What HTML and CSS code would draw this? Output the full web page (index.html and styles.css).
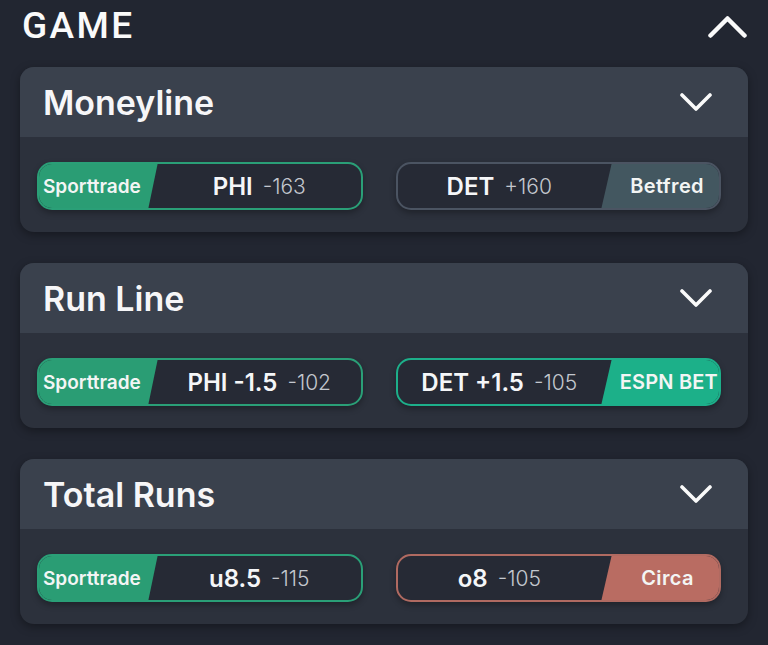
FILE: index.html
```html
<!DOCTYPE html>
<html lang="en">
<head>
  <meta charset="UTF-8" />
  <title>Game Odds</title>
  <link rel="stylesheet" href="styles.css">
</head>
<body>
  <div class="section-head">
    <h1>GAME</h1>
    <svg class="chev-up" width="39" height="22" viewBox="0 0 39 22"><polyline points="2.5,19.5 19.5,2.5 36.5,19.5" /></svg>
  </div>

  <div class="market">
    <div class="market-head">
      <h2>Moneyline</h2>
      <svg class="chev" width="32" height="18" viewBox="0 0 32 18"><polyline points="2,2 16,16 30,2" /></svg>
    </div>
    <div class="market-body">
      <div class="bet left sporttrade">
        <div class="book">Sporttrade</div>
        <div class="pick"><b>PHI</b><span>-163</span></div>
      </div>
      <div class="bet right betfred">
        <div class="pick"><b>DET</b><span>+160</span></div>
        <div class="book">Betfred</div>
      </div>
    </div>
  </div>

  <div class="market">
    <div class="market-head">
      <h2>Run Line</h2>
      <svg class="chev" width="32" height="18" viewBox="0 0 32 18"><polyline points="2,2 16,16 30,2" /></svg>
    </div>
    <div class="market-body">
      <div class="bet left sporttrade">
        <div class="book">Sporttrade</div>
        <div class="pick"><b>PHI -1.5</b><span>-102</span></div>
      </div>
      <div class="bet right espn">
        <div class="pick"><b>DET +1.5</b><span>-105</span></div>
        <div class="book">ESPN BET</div>
      </div>
    </div>
  </div>

  <div class="market">
    <div class="market-head">
      <h2>Total Runs</h2>
      <svg class="chev" width="32" height="18" viewBox="0 0 32 18"><polyline points="2,2 16,16 30,2" /></svg>
    </div>
    <div class="market-body">
      <div class="bet left sporttrade">
        <div class="book">Sporttrade</div>
        <div class="pick"><b>u8.5</b><span>-115</span></div>
      </div>
      <div class="bet right circa">
        <div class="pick"><b>o8</b><span>-105</span></div>
        <div class="book">Circa</div>
      </div>
    </div>
  </div>
</body>
</html>
```

FILE: styles.css
```css
body {
  margin: 0;
  padding: 0 20px;
  background: #222631;
  font-family: Inter, "Open Sans", sans-serif;
  color: #f4f5f7;
}
.section-head {
  height: 50px;
  display: flex;
  align-items: center;
  justify-content: space-between;
  padding: 0 1px 0 2px;
  margin-bottom: 17px;
}
.section-head h1 {
  margin: 0;
  font-family: Roboto, sans-serif;
  font-weight: 500;
  font-size: 37px;
  letter-spacing: 2.4px;
  color: #fafafa;
}
.chev-up polyline,
.chev polyline {
  fill: none;
  stroke: #fafafa;
  stroke-linecap: round;
  stroke-linejoin: round;
}
.chev-up polyline { stroke-width: 4.5; }
.chev polyline { stroke-width: 3.6; }
.chev-up { margin-top: 4px; }

.market {
  background: #2c313c;
  border-radius: 14px;
  overflow: hidden;
  margin-bottom: 31px;
  box-shadow: 0 3px 10px rgba(0,0,0,0.35);
}
.market-head {
  height: 70px;
  background: #3a414d;
  display: flex;
  align-items: center;
  justify-content: space-between;
  padding: 0 36px 0 23px;
}
.market-head h2 {
  margin: 0;
  font-size: 34px;
  font-weight: 600;
  color: #f6f6f8;
}
.market-body {
  display: grid;
  grid-template-columns: 1fr 1fr;
  gap: 33px;
  padding: 25px 27px 22px 17px;
}
.bet {
  height: 48px;
  box-sizing: border-box;
  border: 2px solid #4a5261;
  border-radius: 15px;
  background: #262a35;
  display: flex;
  overflow: hidden;
  box-shadow: 0 3px 6px rgba(0,0,0,0.3);
}
.book {
  display: flex;
  align-items: center;
  font-size: 19px;
  font-weight: 600;
  color: #f3f5f4;
  box-sizing: border-box;
}
.left .book {
  width: 121px;
  padding-left: 6px;
  margin: -2px 0 -2px -2px;
  clip-path: polygon(0 0, 100% 0, calc(100% - 10px) 100%, 0 100%);
}
.right .book {
  width: 120px;
  justify-content: flex-end;
  padding-right: 17px;
  margin: -2px -2px -2px 0;
  font-size: 20px;
  letter-spacing: 0.4px;
  clip-path: polygon(11px 0, 100% 0, 100% 100%, 0 100%);
}
.pick {
  flex: 1;
  display: flex;
  align-items: center;
  justify-content: center;
  gap: 10px;
}
.pick b {
  font-size: 24px;
  font-weight: 600;
  color: #f5f6f8;
}
.pick span {
  font-size: 21px;
  font-weight: 300;
  color: #c3c7ce;
}
.sporttrade { border-color: #2a9f77; }
.sporttrade .book { background: #2a9d74; }
.betfred { border-color: #4b5462; }
.betfred .book { background: #435760; }
.espn { border-color: #1daf8a; }
.espn .book { background: #1cb089; padding-right: 3px; letter-spacing: 0.2px; }
.circa { border-color: #b06a61; }
.circa .book { background: #b96c62; padding-right: 27px; }
```
